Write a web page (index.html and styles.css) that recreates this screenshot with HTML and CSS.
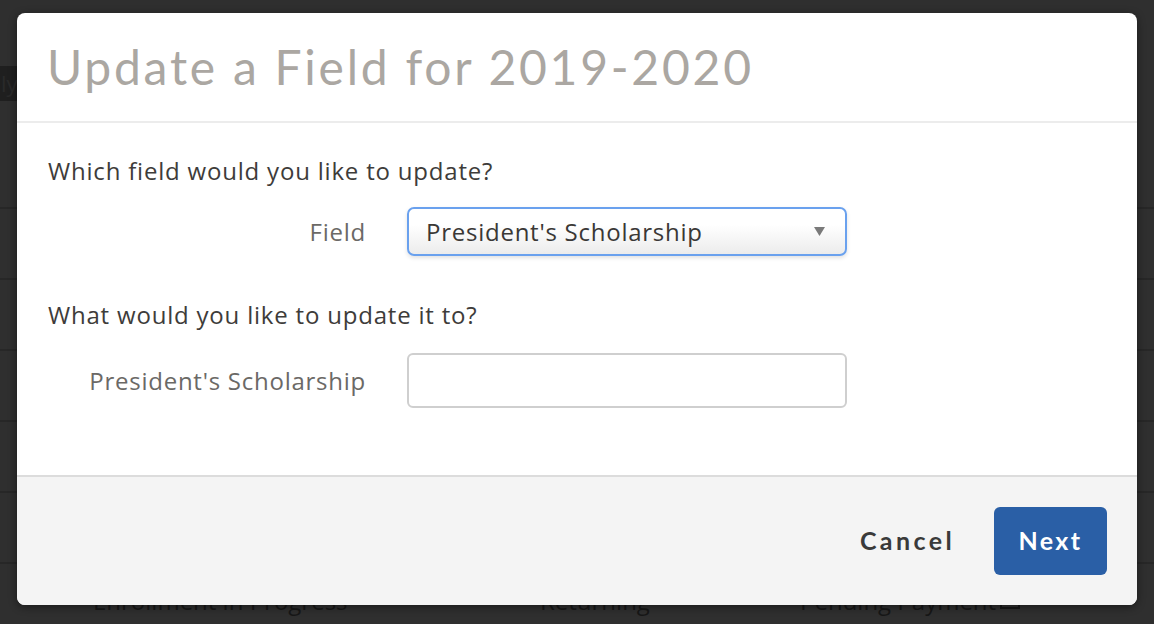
FILE: index.html
```html
<!DOCTYPE html>
<html lang="en">
<head>
<meta charset="utf-8">
<title>Update a Field</title>
<link rel="stylesheet" href="styles.css">
</head>
<body>
<div class="page">
  <div class="toolbar"><span class="chip">ly</span></div>
  <div class="thead"></div>
  <div class="trow"></div>
  <div class="trow"></div>
  <div class="trow"></div>
  <div class="trow"></div>
  <div class="trow"></div>
  <div class="trow last">
    <span class="cell c1">Enrollment in Progress</span>
    <span class="cell c2">Returning</span>
    <span class="cell c3">Pending Payment <span class="box"></span></span>
  </div>
</div>

<div class="modal">
  <div class="modal-header">
    <h1 class="modal-title">Update a Field for 2019-2020</h1>
  </div>
  <div class="modal-body">
    <p class="question">Which field would you like to update?</p>
    <div class="form-row">
      <label class="label">Field</label>
      <div class="select">
        <span class="select-text">President's Scholarship</span>
        <svg class="caret" width="11" height="9" viewBox="0 0 11 9"><path d="M0 0H11L5.5 9Z" fill="#7a7a7a"/></svg>
      </div>
    </div>
    <p class="question q2">What would you like to update it to?</p>
    <div class="form-row row2">
      <label class="label">President's Scholarship</label>
      <div class="input"></div>
    </div>
  </div>
  <div class="modal-footer">
    <span class="btn-cancel">Cancel</span>
    <span class="btn-next">Next</span>
  </div>
</div>
</body>
</html>
```

FILE: styles.css
```css
html, body {
  margin: 0;
  padding: 0;
}
body {
  width: 1154px;
  height: 624px;
  overflow: hidden;
  background: #2f2f2f;
  font-family: "Open Sans", Lato, sans-serif;
  position: relative;
}

/* dimmed page behind the modal */
.page {
  padding-top: 66px;
}
.toolbar {
  height: 35px;
}
.chip {
  display: block;
  width: 17px;
  height: 35px;
  overflow: hidden;
  background: #1f1f1f;
  color: #2a2a2a;
  font-size: 22px;
  line-height: 35px;
  text-indent: 1px;
}
.thead {
  height: 106px;
  border-bottom: 2px solid #272727;
}
.trow {
  height: 69px;
  border-bottom: 2px solid #272727;
}
.trow.last {
  border-bottom: none;
  display: flex;
  align-items: flex-start;
  padding-top: 20px;
  height: 60px;
}
.cell {
  color: #171717;
  font-size: 24px;
}
.c1 { margin-left: 93px; width: 447px; }
.c2 { width: 260px; }
.c3 { display: flex; align-items: center; gap: 4px; }
.box {
  display: inline-block;
  width: 16px;
  height: 12px;
  border: 2px solid #171717;
}

/* modal */
.modal {
  position: absolute;
  left: 17px;
  top: 13px;
  width: 1120px;
  height: 592px;
  background: #fff;
  border-radius: 8px;
  overflow: hidden;
  box-shadow: 0 2px 8px rgba(0, 0, 0, 0.45);
  display: flex;
  flex-direction: column;
}
.modal-header {
  height: 108px;
  border-bottom: 2px solid #ececec;
  display: flex;
  align-items: center;
  padding-left: 30px;
}
.modal-title {
  margin: 0;
  font-family: Lato, sans-serif;
  font-size: 48px;
  font-weight: 400;
  letter-spacing: 2.75px;
  color: #aba7a2;
  padding-bottom: 2px;
}
.modal-body {
  flex: 1;
  padding: 33px 31px 0;
}
.question {
  margin: 0;
  font-size: 24px;
  line-height: 30px;
  color: #3e3c3a;
  letter-spacing: 0.8px;
}
.q2 {
  margin-top: 44px;
}
.form-row {
  display: flex;
  align-items: center;
  margin-top: 21px;
}
.row2 {
  margin-top: 23px;
}
.label {
  width: 318px;
  text-align: right;
  font-size: 24px;
  color: #6b6966;
  letter-spacing: 0.75px;
  margin-right: 41px;
}
.select {
  box-sizing: border-box;
  width: 440px;
  height: 49px;
  border: 2px solid #6aa1ee;
  border-radius: 7px;
  background: linear-gradient(#ffffff, #ffffff 35%, #ececec);
  box-shadow: 0 2px 4px rgba(0, 0, 0, 0.12);
  display: flex;
  align-items: center;
  justify-content: space-between;
  padding: 0 20px 0 17px;
}
.select-text {
  font-size: 24px;
  color: #3a3836;
  letter-spacing: 0.75px;
}
.caret {
  display: block;
}
.input {
  box-sizing: border-box;
  width: 440px;
  height: 55px;
  border: 2px solid #cfcfcf;
  border-radius: 6px;
  background: #fff;
}
.modal-footer {
  height: 128px;
  border-top: 2px solid #dcdcdc;
  background: #f4f4f4;
  display: flex;
  align-items: center;
  justify-content: flex-end;
  padding-right: 30px;
}
.btn-cancel {
  font-family: Lato, sans-serif;
  font-size: 25px;
  font-weight: 700;
  letter-spacing: 3.4px;
  color: #3a3a3a;
  margin-right: 39px;
  padding-bottom: 3px;
}
.btn-next {
  box-sizing: border-box;
  width: 113px;
  height: 68px;
  border-radius: 6px;
  background: #2a5fa6;
  color: #fff;
  font-family: Lato, sans-serif;
  font-size: 25px;
  font-weight: 700;
  letter-spacing: 2.4px;
  display: flex;
  align-items: center;
  justify-content: center;
  padding-bottom: 3px;
}
```
